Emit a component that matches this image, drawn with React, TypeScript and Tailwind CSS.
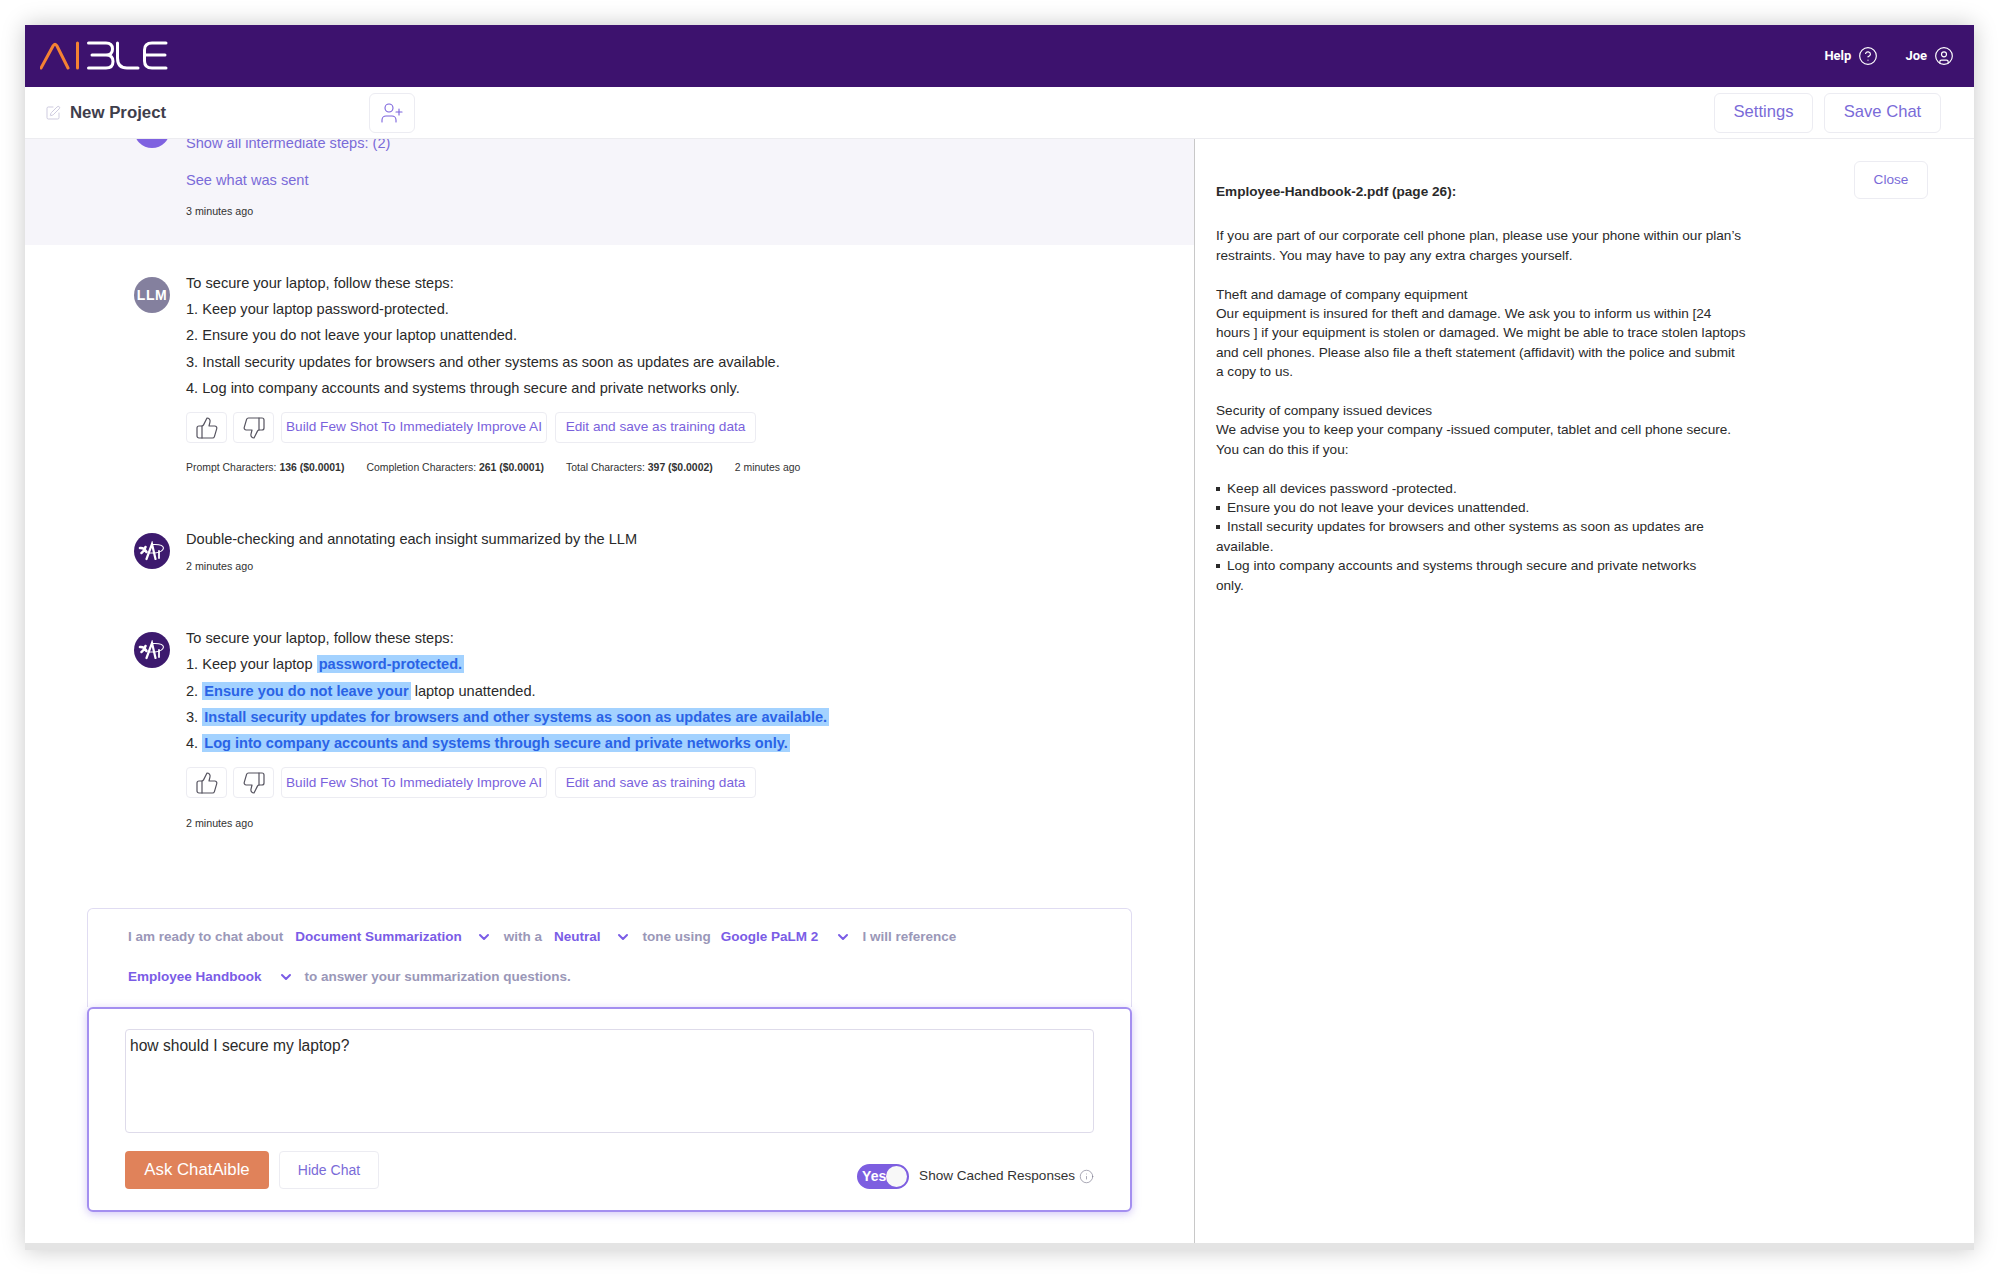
import { ChevronDown, CircleHelp, CircleUser, Info, SquarePen, ThumbsDown, ThumbsUp, UserPlus } from "lucide-react";

const sans = "font-['Liberation_Sans',Arial,sans-serif]";

function Logo() {
  return (
    <svg width="128" height="30" viewBox="40 41 128 30" fill="none" strokeWidth="3" strokeLinecap="round" strokeLinejoin="round">
      <path d="M41 68 L53 46 Q55 42.5 57 46 L68 68" stroke="#f58233" />
      <path d="M77.5 43 V68" stroke="#f58233" />
      <path d="M88.5 43 H106 Q112.5 43 112.5 49 Q112.5 55 106 55 H92 M106 55 Q113 55 113 61.5 Q113 68 106 68 H88.5" stroke="#fff" />
      <path d="M117.5 43 V58 Q117.5 68 127 68 H138" stroke="#fff" />
      <path d="M166 43 H152 Q144.5 43 144.5 50 V61 Q144.5 68 152 68 H166 M145 55 H165" stroke="#fff" />
    </svg>
  );
}

function AiAvatar() {
  return (
    <div className="flex h-[36px] w-[36px] shrink-0 items-center justify-center rounded-full bg-[#3d1a6e]">
      <svg width="28" height="20" viewBox="0 0 28 20" fill="none" stroke="#fff" strokeLinecap="round">
        <path d="M2 7 Q6 6.5 8.5 11 M7.5 6 Q6.5 10 3.5 12" strokeWidth="2.6" />
        <path d="M8.5 18 L14 3 L17.5 18" strokeWidth="2.2" />
        <path d="M10.5 12 H17 Q25 11 25.5 7 Q25 3 15 3.5" strokeWidth="1.1" />
        <path d="M21 10 V17" strokeWidth="1.8" />
      </svg>
    </div>
  );
}

function LlmAvatar() {
  return (
    <div className="flex h-[36px] w-[36px] shrink-0 items-center justify-center rounded-full bg-[#84809e] text-[14px] font-bold tracking-[0.5px] text-white">
      LLM
    </div>
  );
}

function Actions() {
  return (
    <div className="mt-[11px] flex h-[31px] text-[13.65px] text-[#7a62dc]">
      <button className="flex w-[41px] items-center justify-center rounded-[4px] border border-[#ececf2] text-[#55535f]">
        <ThumbsUp size={24} strokeWidth={1.2} />
      </button>
      <button className="ml-[6px] flex w-[41px] items-center justify-center rounded-[4px] border border-[#ececf2] text-[#55535f]">
        <ThumbsDown size={24} strokeWidth={1.2} />
      </button>
      <button className="ml-[7px] w-[266px] whitespace-nowrap rounded-[4px] border border-[#ececf2]">Build Few Shot To Immediately Improve AI</button>
      <button className="ml-[8px] w-[201px] whitespace-nowrap rounded-[4px] border border-[#ececf2]">Edit and save as training data</button>
    </div>
  );
}

function Stat({ label, value }: { label: string; value: string }) {
  return (
    <span>
      {label} <b>{value}</b>
    </span>
  );
}

function Mark({ children }: { children: string }) {
  return <span className="bg-[#a3d2ff] px-[2px] py-[1px] font-bold text-[#2a63e6]">{children}</span>;
}

function PickerText({ children }: { children: string }) {
  return <span className="text-[#9a97b8]">{children}</span>;
}

function Picker({ children, chevron = "ml-[14px]" }: { children: string; chevron?: string }) {
  return (
    <span className="flex items-center text-[#7a5ce6]">
      {children}
      <ChevronDown size={16} strokeWidth={3} className={chevron} />
    </span>
  );
}

function Bullet({ children }: { children: string }) {
  return (
    <div>
      <span className="mr-[7px] inline-block h-[4px] w-[4px] bg-[#2a2a2a] align-[2px]" />
      {children}
    </div>
  );
}

const sourceText = `If you are part of our corporate cell phone plan, please use your phone within our plan’s
restraints. You may have to pay any extra charges yourself.

Theft and damage of company equipment
Our equipment is insured for theft and damage. We ask you to inform us within [24
hours ] if your equipment is stolen or damaged. We might be able to trace stolen laptops
and cell phones. Please also file a theft statement (affidavit) with the police and submit
a copy to us.

Security of company issued devices
We advise you to keep your company -issued computer, tablet and cell phone secure.
You can do this if you:`;

export default function App() {
  return (
    <div className={`h-[1275px] w-full overflow-hidden bg-white px-[25px] pt-[25px] ${sans}`}>
      <div className="flex h-[1225px] w-[1949px] flex-col border-b-[7px] border-[#e4e4e4] bg-white shadow-[0_0_22px_rgba(0,0,0,0.22)]">
        <header className="flex h-[62px] shrink-0 items-center justify-between bg-[#3d126e] pl-[15px] pr-[20px] text-white">
          <Logo />
          <div className="flex items-center font-['Roboto',sans-serif] text-[13px] font-bold">
            <span>Help</span>
            <CircleHelp size={20} strokeWidth={1.4} className="ml-[7px]" />
            <span className="ml-[27px]">Joe</span>
            <CircleUser size={20} strokeWidth={1.4} className="ml-[7px]" />
          </div>
        </header>

        <div className="flex h-[52px] shrink-0 items-center border-b border-[#ececf0] pl-[20px] pr-[33px]">
          <SquarePen size={16} strokeWidth={1.25} className="text-[#c4c1d8]" />
          <span className="ml-[9px] text-[16.8px] font-bold text-[#3f3e4c]">New Project</span>
          <button className="ml-[203px] flex h-[40px] w-[46px] items-center justify-center rounded-[6px] border border-[#ececf2] text-[#7a62dc]">
            <UserPlus size={24} strokeWidth={1.1} />
          </button>
          <button className="ml-auto h-[40px] w-[99px] rounded-[6px] border border-[#ececf2] text-[16.6px] text-[#7a6bd8]">Settings</button>
          <button className="ml-[11px] h-[40px] w-[117px] rounded-[6px] border border-[#ececf2] text-[16.6px] text-[#7a6bd8]">Save Chat</button>
        </div>

        <div className="flex min-h-0 flex-1">
          <main className="flex w-[1170px] shrink-0 flex-col border-r border-[#c8c8c8] pb-[31px]">
            <div className="min-h-0 flex-1 overflow-hidden text-[14.6px] text-[#2a2a2a]">
              <section className="flex h-[106px] gap-[16px] overflow-hidden bg-[#f6f5fa] pl-[109px]">
                <div className="-mt-[27px] h-[36px] w-[36px] shrink-0 rounded-full bg-[#7f62e0]" />
                <div className="-mt-[6px] text-[#7a6bd8]">
                  <div className="h-[20px] leading-[20px]">Show all intermediate steps: (2)</div>
                  <div className="mt-[17px] h-[20px] leading-[20px]">See what was sent</div>
                  <div className="mt-[13px] h-[16px] text-[10.7px] leading-[16px] text-[#333]">3 minutes ago</div>
                </div>
              </section>

              <section className="flex gap-[16px] pl-[109px] pt-[25px] leading-[26.2px]">
                <div className="mt-[7px]"><LlmAvatar /></div>
                <div>
                  <div>To secure your laptop, follow these steps:</div>
                  <div>1. Keep your laptop password-protected.</div>
                  <div>2. Ensure you do not leave your laptop unattended.</div>
                  <div>3. Install security updates for browsers and other systems as soon as updates are available.</div>
                  <div>4. Log into company accounts and systems through secure and private networks only.</div>
                  <Actions />
                  <div className="mt-[17px] flex h-[16px] gap-[22px] whitespace-nowrap text-[10.45px] leading-[16px] text-[#333]">
                    <Stat label="Prompt Characters:" value="136 ($0.0001)" />
                    <Stat label="Completion Characters:" value="261 ($0.0001)" />
                    <Stat label="Total Characters:" value="397 ($0.0002)" />
                    <span>2 minutes ago</span>
                  </div>
                </div>
              </section>

              <section className="mt-[50px] flex gap-[16px] pl-[109px] leading-[26.2px]">
                <div className="mt-[7px]"><AiAvatar /></div>
                <div>
                  <div>Double-checking and annotating each insight summarized by the LLM</div>
                  <div className="mt-[6px] h-[16px] text-[10.7px] leading-[16px] text-[#333]">2 minutes ago</div>
                </div>
              </section>

              <section className="mt-[51px] flex gap-[16px] pl-[109px] leading-[26.2px]">
                <div className="mt-[7px]"><AiAvatar /></div>
                <div>
                  <div>To secure your laptop, follow these steps:</div>
                  <div>1. Keep your laptop <Mark>password-protected.</Mark></div>
                  <div>2. <Mark>Ensure you do not leave your</Mark> laptop unattended.</div>
                  <div>3. <Mark>Install security updates for browsers and other systems as soon as updates are available.</Mark></div>
                  <div>4. <Mark>Log into company accounts and systems through secure and private networks only.</Mark></div>
                  <Actions />
                  <div className="mt-[17px] h-[16px] text-[10.7px] leading-[16px] text-[#333]">2 minutes ago</div>
                </div>
              </section>
            </div>

            <div className="ml-[62px] w-[1045px] shrink-0">
              <div className="h-[99px] rounded-t-[6px] border border-b-0 border-[#e0dcf2] pl-[40px] pt-[19px] text-[13.5px] font-bold">
                <div className="flex h-[18px] items-center whitespace-nowrap">
                  <PickerText>I am ready to chat about</PickerText>
                  <span className="ml-[12px]"><Picker>Document Summarization</Picker></span>
                  <span className="ml-[12px]"><PickerText>with a</PickerText></span>
                  <span className="ml-[12px]"><Picker>Neutral</Picker></span>
                  <span className="ml-[12px]"><PickerText>tone using</PickerText></span>
                  <span className="ml-[10px]"><Picker chevron="ml-[17px]">Google PaLM 2</Picker></span>
                  <span className="ml-[11px]"><PickerText>I will reference</PickerText></span>
                </div>
                <div className="mt-[22px] flex h-[18px] items-center whitespace-nowrap">
                  <Picker chevron="ml-[16px]">Employee Handbook</Picker>
                  <span className="ml-[11px]"><PickerText>to answer your summarization questions.</PickerText></span>
                </div>
              </div>
              <div className="h-[205px] rounded-[6px] border-2 border-[#a48ff0] bg-white px-[36px] pt-[20px] shadow-[0_2px_8px_rgba(122,92,230,0.35)]">
                <div className="h-[104px] rounded-[4px] border border-[#dedbea] px-[4px] pb-[5px] pt-[6px] text-[15.6px] leading-[20px] text-[#2a2a2a]">
                  how should I secure my laptop?
                </div>
                <div className="mt-[18px] flex h-[38px]">
                  <button className="w-[144px] rounded-[4px] bg-[#e0825a] text-[16.8px] text-white">Ask ChatAible</button>
                  <button className="ml-[10px] w-[100px] rounded-[4px] border border-[#ececf2] text-[14px] text-[#7a6bd8]">Hide Chat</button>
                  <div className="ml-auto mt-[13px] flex h-[25px] items-center text-[13.55px] text-[#333]">
                    <div className="flex h-[25px] w-[52px] items-center justify-between rounded-full border-2 border-[#7d5ee0] bg-[#7d5ee0] pl-[3px] text-[14px] font-bold text-white">
                      Yes
                      <span className="h-[21px] w-[21px] rounded-full bg-[#f8f8f8]" />
                    </div>
                    <span className="ml-[10px]">Show Cached Responses</span>
                    <Info size={15} strokeWidth={1} className="ml-[4px] text-[#77758a]" />
                  </div>
                </div>
              </div>
            </div>
          </main>

          <aside className="flex flex-1 items-start justify-between pl-[21px] pr-[46px] pt-[22px] text-[13.6px] leading-[19.4px] text-[#2a2a2a]">
            <div className="pt-[21px]">
              <div className="font-bold">Employee-Handbook-2.pdf (page 26):</div>
              <div className="mt-[25px] whitespace-pre-line">{sourceText}</div>
              <div className="mt-[19.4px]">
                <Bullet>Keep all devices password -protected.</Bullet>
                <Bullet>Ensure you do not leave your devices unattended.</Bullet>
                <Bullet>Install security updates for browsers and other systems as soon as updates are</Bullet>
                <div>available.</div>
                <Bullet>Log into company accounts and systems through secure and private networks</Bullet>
                <div>only.</div>
              </div>
            </div>
            <button className="h-[38px] w-[74px] rounded-[6px] border border-[#ececf2] text-[#7a6bd8]">Close</button>
          </aside>
        </div>
      </div>
    </div>
  );
}
